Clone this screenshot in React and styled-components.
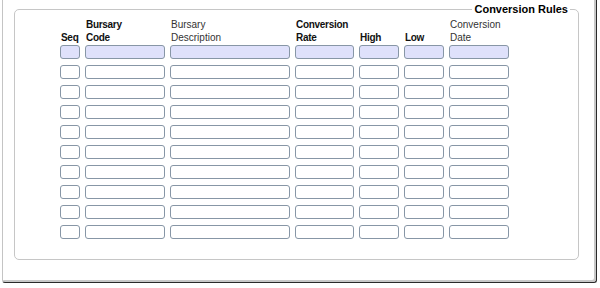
import React from 'react'
import styled, { createGlobalStyle } from 'styled-components'

const GlobalStyle = createGlobalStyle`
  html, body {
    margin: 0;
    padding: 0;
    background: #fff;
  }
  body {
    font-family: "Liberation Sans", Arial, sans-serif;
    color: #000;
  }
`

const Frame = styled.div`
  box-sizing: border-box;
  margin: 0 3px 0 2px;
  height: 283px;
  border: 1px solid #c4c4c4;
  border-top: none;
  border-right-color: #2a2a2a;
  border-bottom-color: #2a2a2a;
  border-radius: 0 0 3px 3px;
  box-shadow: inset -2px -2px 0 #c8c8c8;
  padding-top: 3px;
`

const Group = styled.fieldset`
  margin: 0 17px 0 11px;
  padding: 0 0 20px 45px;
  border: 1px solid #c6c6c6;
  border-radius: 5px;
  min-width: 0;
`

const Legend = styled.legend`
  margin-left: auto;
  margin-right: 8px;
  padding: 0 2px;
  font-size: 11px;
  font-weight: bold;
  line-height: 13px;
`

const Grid = styled.div`
  display: grid;
  grid-template-columns: 20px 80px 120px 59px 40px 40px 60px;
  column-gap: 5px;
  row-gap: 6px;
`

const Head = styled.div`
  font-size: 10px;
  line-height: 13px;
  font-weight: ${({ $bold }) => ($bold ? 'bold' : 'normal')};
  letter-spacing: ${({ $bold }) => ($bold ? '-0.3px' : '0')};
  color: ${({ $bold }) => ($bold ? '#111' : '#333')};
  padding-left: 1px;
  margin-bottom: -5px;
  display: flex;
  flex-direction: column;
  justify-content: flex-end;
  height: 28px;
  white-space: nowrap;
`

const Field = styled.div`
  box-sizing: border-box;
  height: 14px;
  border: 1px solid #8796a6;
  border-radius: 3px;
  background: ${({ $current }) => ($current ? '#dfe1fb' : '#fff')};
`

const columns = [
  { lines: ['Seq'], bold: true },
  { lines: ['Bursary', 'Code'], bold: true },
  { lines: ['Bursary', 'Description'], bold: false },
  { lines: ['Conversion', 'Rate'], bold: true },
  { lines: ['High'], bold: true },
  { lines: ['Low'], bold: true },
  { lines: ['Conversion', 'Date'], bold: false },
]

const rows = Array.from({ length: 10 }, (_, i) => i)

const App = () => (
  <>
    <GlobalStyle />
    <Frame>
      <Group>
        <Legend>Conversion Rules</Legend>
        <Grid>
          {columns.map((c, i) => (
            <Head key={i} $bold={c.bold}>
              {c.lines.map((l) => (
                <span key={l}>{l}</span>
              ))}
            </Head>
          ))}
          {rows.map((r) =>
            columns.map((c, i) => <Field key={`${r}-${i}`} $current={r === 0} />)
          )}
        </Grid>
      </Group>
    </Frame>
  </>
)

export default App
